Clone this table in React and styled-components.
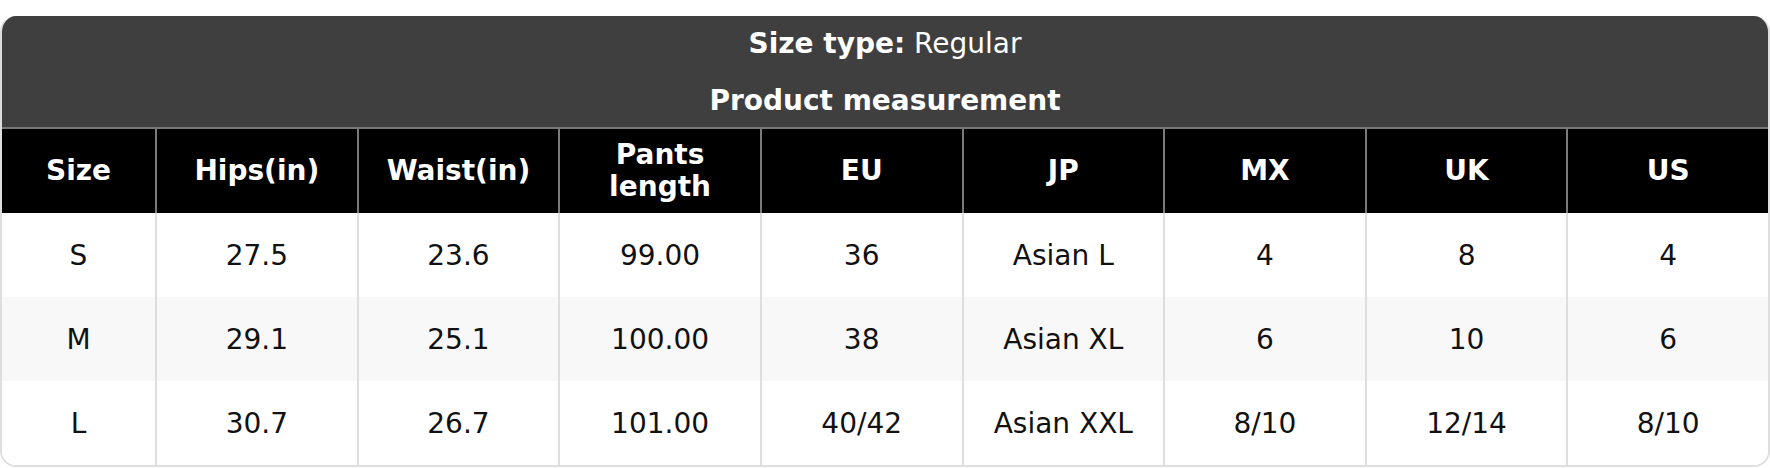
import React from "react";
import styled, { createGlobalStyle } from "styled-components";

const GlobalStyle = createGlobalStyle`
  body {
    margin: 0;
    background: #fff;
    font-family: "DejaVu Sans", "Liberation Sans", sans-serif;
  }
`;

const Page = styled.div`
  padding-top: 16px;
`;

const Card = styled.div`
  border: 2px solid #dedede;
  border-top: none;
  border-radius: 16px;
  overflow: hidden;
  background: #fff;
`;

const Caption = styled.div`
  background: #3f3f3f;
  color: #fff;
  text-align: center;
  padding: 11px 0 9px;
  margin: 0 -2px;
`;

const CaptionLine = styled.div`
  font-size: 28px;
  line-height: 34px;
  margin-top: ${(p) => (p.$second ? "23px" : "0")};
  font-weight: ${(p) => (p.$bold ? 700 : 400)};
`;

const Grid = styled.div`
  display: grid;
  grid-template-columns: 153px repeat(8, 1fr);
`;

const HeadCell = styled.div`
  background: #000;
  color: #fff;
  font-size: 28px;
  font-weight: 700;
  line-height: 32px;
  height: 84px;
  display: flex;
  align-items: center;
  justify-content: center;
  text-align: center;
  border-top: 2px solid #777;
  border-left: ${(p) => (p.$first ? "none" : "2px solid #7a7a7a")};
`;

const Cell = styled.div`
  background: ${(p) => (p.$alt ? "#f8f8f8" : "#fff")};
  color: #111;
  font-size: 28px;
  height: 84px;
  display: flex;
  align-items: center;
  justify-content: center;
  border-left: ${(p) => (p.$first ? "none" : "2px solid #dedede")};
`;

const headers = ["Size", "Hips(in)", "Waist(in)", "Pants length", "EU", "JP", "MX", "UK", "US"];

const rows = [
  ["S", "27.5", "23.6", "99.00", "36", "Asian L", "4", "8", "4"],
  ["M", "29.1", "25.1", "100.00", "38", "Asian XL", "6", "10", "6"],
  ["L", "30.7", "26.7", "101.00", "40/42", "Asian XXL", "8/10", "12/14", "8/10"],
];

export default function App() {
  return (
    <Page>
      <GlobalStyle />
      <Card>
        <Caption>
          <CaptionLine>
            <b>Size type:</b> Regular
          </CaptionLine>
          <CaptionLine $second $bold>
            Product measurement
          </CaptionLine>
        </Caption>
        <Grid>
          {headers.map((h, i) => (
            <HeadCell key={h} $first={i === 0}>
              {h === "Pants length" ? (
                <span>
                  Pants
                  <br />
                  length
                </span>
              ) : (
                h
              )}
            </HeadCell>
          ))}
          {rows.map((r, ri) =>
            r.map((v, ci) => (
              <Cell key={ri + "-" + ci} $first={ci === 0} $alt={ri === 1}>
                {v}
              </Cell>
            ))
          )}
        </Grid>
      </Card>
    </Page>
  );
}
